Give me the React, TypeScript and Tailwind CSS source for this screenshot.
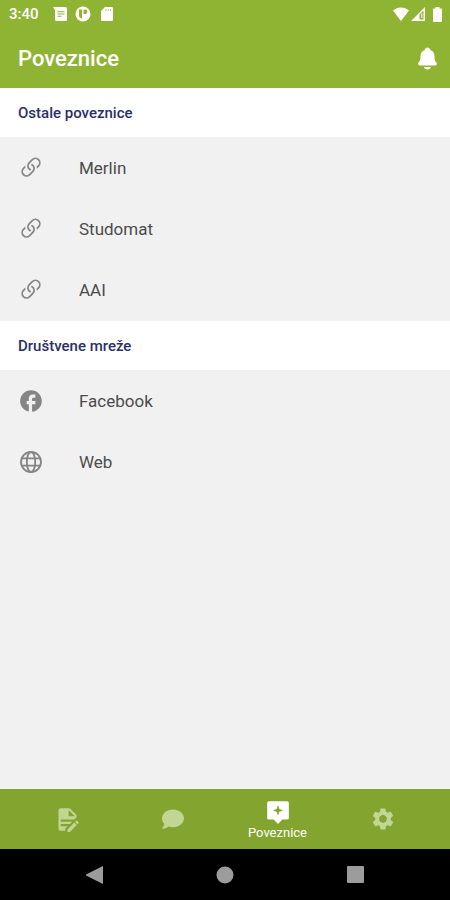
import React from 'react';
import { BsLink45Deg } from 'react-icons/bs';
import { FaComment } from 'react-icons/fa';
import { IoNotifications } from 'react-icons/io5';
import { MdFacebook, MdSettings } from 'react-icons/md';

// --- Status bar ---
const StatusBar = () => (
  <div className="flex h-7 items-center justify-between pl-[9px] pr-2 text-white">
    <div className="flex items-center">
      <span className="text-[15px] font-medium leading-5">3:40</span>
      <svg className="ml-3.5" width="14" height="14" viewBox="0 0 14 14" fill="currentColor" aria-hidden="true">
        <path d="M0 0h12.5a1.5 1.5 0 0 1 1.5 1.5v11a1.5 1.5 0 0 1-1.5 1.5h-9A1.5 1.5 0 0 1 2 12.500V3z" />
        <path d="M4.500 4.800h7M4.500 7h7M4.500 9.200h4" stroke="#8fb434" strokeWidth="1.100" />
      </svg>
      <svg className="ml-2" width="16" height="16" viewBox="0 0 16 16" fill="currentColor" aria-hidden="true">
        <circle cx="8" cy="8" r="7.500" />
        <path d="M4 3.500h3v9a5 5 0 0 1-3-2z" fill="#8fb434" />
        <path d="M8.500 3.500h1.500a2.300 2.300 0 0 1 0 4.600H8.500z" fill="#8fb434" />
      </svg>
      <svg className="ml-2.5" width="12" height="14" viewBox="0 0 12 14" fill="currentColor" aria-hidden="true">
        <path d="M4 0h7a1 1 0 0 1 1 1v12a1 1 0 0 1-1 1H1a1 1 0 0 1-1-1V4z" />
        <path d="M5 2v2M7.300 2v2M9.600 2v2" stroke="#8fb434" strokeWidth="1" opacity=".7" />
      </svg>
    </div>
    <div className="flex items-center">
      <svg width="16" height="14" viewBox="0 0 16 14" fill="currentColor" aria-hidden="true">
        <path d="M8 14L0 3.500C4.500-.5 11.500-.5 16 3.500z" />
      </svg>
      <svg className="ml-0.5" width="14" height="14" viewBox="0 0 14 14" fill="currentColor" aria-hidden="true">
        <path d="M14 0v14H0zM12.500 3.600L8.500 7.600v4.900h4z" fillRule="evenodd" />
        <path d="M10 6.500h1.500v4.500H10z" opacity=".7" />
      </svg>
      <svg className="ml-2" width="9" height="15" viewBox="0 0 9 15" fill="currentColor" aria-hidden="true">
        <path d="M2.500 0h4v1.500H8a1 1 0 0 1 1 1V14a1 1 0 0 1-1 1H1a1 1 0 0 1-1-1V2.500a1 1 0 0 1 1-1h1.500z" />
      </svg>
    </div>
  </div>
);

// --- Icons ---
const GlobeIcon = ({ size }: any) => (
  <svg width={size} height={size} viewBox="0 0 24 24" fill="none" stroke="currentColor" strokeWidth="2" aria-hidden="true">
    <circle cx="12" cy="12" r="10.900" />
    <ellipse cx="12" cy="12" rx="4.600" ry="10.900" />
    <path d="M2 8h20M2 16h20" />
  </svg>
);

const DocumentEditIcon = ({ size }: any) => (
  <svg width={size} height={size} viewBox="0 0 24 24" fill="currentColor" aria-hidden="true">
    <path d="M6 2C4.890 2 4 2.890 4 4v16a2 2 0 0 0 2 2h4v-1.910L12.090 18H6v-2h8.090l2-2H6v-2h12.090L20 10.090V8l-6-6H6m7 1.500L18.500 9H13V3.500M20.150 13c-.15 0-.29.050-.4.160l-1.020 1.020 2.090 2.080 1.020-1.010c.21-.22.21-.58 0-.79l-1.300-1.300a.55.55 0 0 0-.39-.160m-2.010 1.770L12 20.920V23h2.080l6.150-6.150-2.090-2.080z" />
  </svg>
);

const PlusBubbleIcon = ({ size }: any) => (
  <svg width={size} height={size} viewBox="0 0 24 24" fill="currentColor" aria-hidden="true">
    <path d="M3.500 2h17A1.500 1.500 0 0 1 22 3.500v14a1.500 1.500 0 0 1-1.500 1.500H16l-4 4-4-4H3.500A1.500 1.500 0 0 1 2 17.500v-14A1.500 1.500 0 0 1 3.500 2z" />
    <path d="M12 6.500l1 3 3 1-3 1-1 3-1-3-3-1 3-1z" fill="#83a42f" stroke="#83a42f" strokeWidth=".6" />
  </svg>
);

// --- List ---
const SectionTitle = ({ children }: any) => (
  <h2 className="flex h-[49px] items-center bg-white px-[18px] pt-px text-[15px] font-medium leading-5 text-[#2b2f6b]">
    {children}
  </h2>
);

const LinkRow = ({ icon: Icon, size, label }: any) => (
  <li>
    <a href="#" className="flex h-[61px] items-center px-[18px] pt-px text-[17px] leading-6 text-[#4c4c4c]">
      <span className="flex w-[26px] justify-center text-[#858585]">
        <Icon size={size} className="shrink-0" />
      </span>
      <span className="ml-[35px]">{label}</span>
    </a>
  </li>
);

const sections = [
  {
    title: 'Ostale poveznice',
    links: [
      { label: 'Merlin', icon: BsLink45Deg, size: 28 },
      { label: 'Studomat', icon: BsLink45Deg, size: 28 },
      { label: 'AAI', icon: BsLink45Deg, size: 28 },
    ],
  },
  {
    title: 'Društvene mreže',
    links: [
      { label: 'Facebook', icon: MdFacebook, size: 26 },
      { label: 'Web', icon: GlobeIcon, size: 22 },
    ],
  },
];

// --- Bottom tabs ---
const TabButton = ({ icon: Icon, size, label, name }: any) => (
  <button
    type="button"
    aria-label={name}
    className={`flex flex-1 flex-col items-center justify-center ${label ? 'pt-0.5 text-white' : 'text-[#c1d694]'}`}
  >
    <Icon size={size} />
    {label && <span className="text-[13px] leading-4">{label}</span>}
  </button>
);

export default function App() {
  return (
    <div className="flex min-h-screen flex-col bg-[#f1f1f1] font-['Roboto',sans-serif]">
      <header className="bg-[#8fb434]">
        <StatusBar />
        <div className="flex h-[60px] items-center justify-between pl-[18px] pr-2.5 text-white">
          <h1 className="pt-0.5 text-[22px] font-medium leading-7">Poveznice</h1>
          <button type="button" aria-label="Obavijesti">
            <IoNotifications size={25} />
          </button>
        </div>
      </header>

      <main className="flex-1">
        {sections.map((section) => (
          <section key={section.title}>
            <SectionTitle>{section.title}</SectionTitle>
            <ul className="pb-px">
              {section.links.map((link) => (
                <LinkRow key={link.label} {...link} />
              ))}
            </ul>
          </section>
        ))}
      </main>

      <nav className="flex h-[60px] bg-[#83a42f] px-[15px]">
        <TabButton icon={DocumentEditIcon} size={27} name="Dokumenti" />
        <TabButton icon={FaComment} size={22} name="Poruke" />
        <TabButton icon={PlusBubbleIcon} size={26} name="Poveznice" label="Poveznice" />
        <TabButton icon={MdSettings} size={26} name="Postavke" />
      </nav>

      <div className="flex h-[51px] items-center justify-between bg-black px-[86px] text-[#9c9c9c]">
        <button type="button" aria-label="Natrag">
          <svg width="17" height="18" viewBox="0 0 17 18" fill="currentColor">
            <path d="M17 0v18L0 9.500v-1z" />
          </svg>
        </button>
        <button type="button" aria-label="Početna">
          <svg width="18" height="18" viewBox="0 0 18 18" fill="currentColor">
            <circle cx="9" cy="9" r="8.500" />
          </svg>
        </button>
        <button type="button" aria-label="Nedavno">
          <svg width="17" height="17" viewBox="0 0 17 17" fill="currentColor">
            <rect width="17" height="17" rx="1" />
          </svg>
        </button>
      </div>
    </div>
  );
}
